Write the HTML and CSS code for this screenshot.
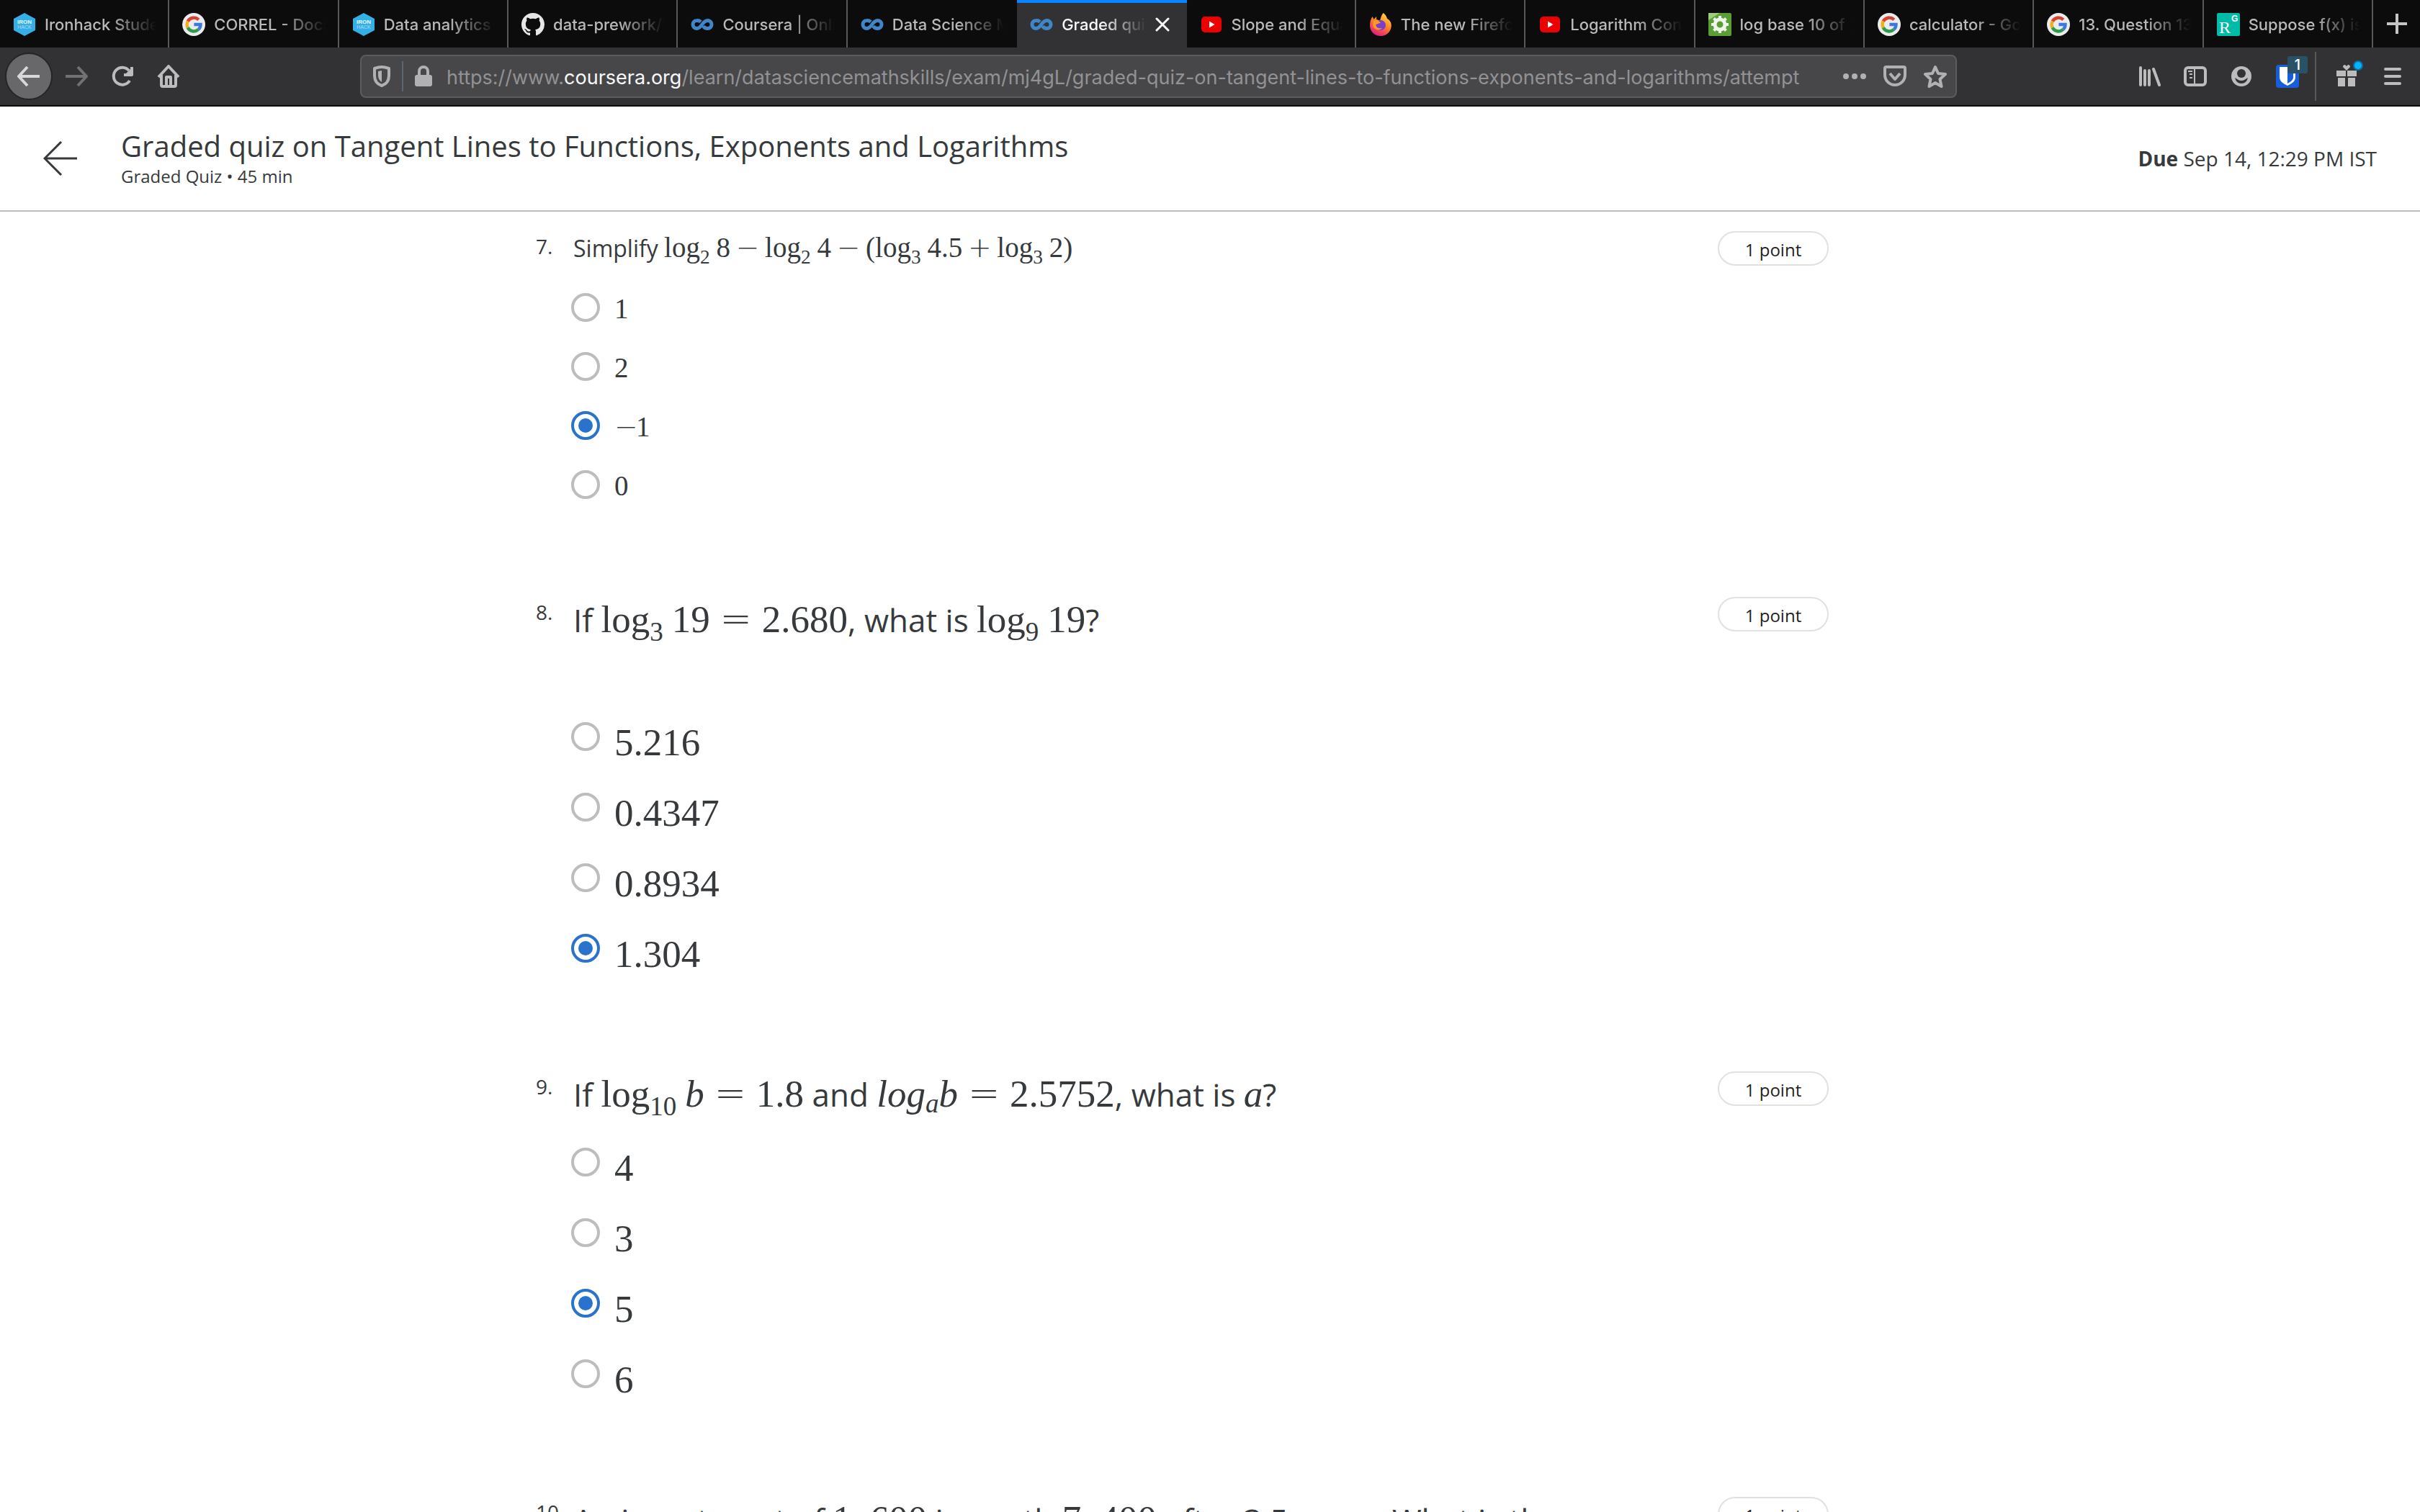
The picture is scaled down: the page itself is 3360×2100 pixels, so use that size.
FILE: index.html
```html
<!DOCTYPE html>
<html lang="en">
<head>
<meta charset="utf-8">
<title>Graded quiz on Tangent Lines to Functions, Exponents and Logarithms</title>
<link rel="stylesheet" href="styles.css">
</head>
<body>
<svg class="sprite" aria-hidden="true">
  <symbol id="google" viewBox="0 0 32 32">
    <circle cx="16" cy="16" r="16" fill="#ececec"/>
    <g fill="none" stroke-width="4.4">
      <path stroke="#d8402f" d="M7.7 11.6A9.5 9.5 0 0 1 22.8 9.4"/>
      <path stroke="#eeb01c" d="M7.7 20.4a9.5 9.5 0 0 1 0-8.8"/>
      <path stroke="#2f9a4c" d="M22.5 22.9A9.5 9.5 0 0 1 7.7 20.4"/>
      <path stroke="#3f78dc" d="M16.4 16h9.1c0 3-1.1 5.300-3 6.900"/>
    </g>
  </symbol>
  <symbol id="github" viewBox="0 0 16 16">
    <path fill="#e6e6e6" d="M8 0C3.580 0 0 3.580 0 8c0 3.540 2.290 6.530 5.470 7.590.4.070.55-.17.55-.38v-1.490c-2.010.37-2.530-.49-2.690-.94-.09-.23-.48-.94-.82-1.130-.28-.15-.68-.52-.01-.53.63-.01 1.080.58 1.230.82.72 1.210 1.870.87 2.330.66.07-.52.28-.87.51-1.070-1.780-.2-3.640-.89-3.640-3.950 0-.87.31-1.590.82-2.150-.08-.2-.36-1.020.08-2.120 0 0 .67-.21 2.200.82a7.600 7.600 0 0 1 4 0c1.530-1.040 2.200-.82 2.200-.82.44 1.100.16 1.920.08 2.120.51.56.82 1.270.82 2.150 0 3.070-1.870 3.750-3.650 3.950.29.25.54.73.54 1.480v2.200c0 .21.15.46.55.38A8 8 0 0 0 16 8c0-4.420-3.580-8-8-8z"/>
  </symbol>
  <symbol id="coursera" viewBox="0 0 32 32">
    <path fill="none" stroke="#3f86c8" stroke-width="5" d="M14 12.300C12.300 10.800 10.500 10.300 8.500 10.500a5.500 5.500 0 0 0 0 11C15.500 21.500 16 10.500 23.500 10.500a5.500 5.500 0 0 1 0 11c-3 0-4.800-1.300-6-3.300"/>
  </symbol>
  <symbol id="youtube" viewBox="0 0 32 32">
    <rect x="2" y="5" width="28" height="22" rx="5" fill="#ec0000"/>
    <path fill="#fff" d="M13 11.500 20.500 16 13 20.500z"/>
  </symbol>
  <symbol id="firefox" viewBox="0 0 32 32">
    <defs>
      <linearGradient id="flame" x1=".8" y1="0" x2=".3" y2="1"><stop offset="0" stop-color="#ffe14d"/><stop offset=".45" stop-color="#ff8a1f"/><stop offset="1" stop-color="#e31587"/></linearGradient>
    </defs>
    <path fill="url(#flame)" d="M19.500 0c4 3 5 6 5.500 8 4 2 6 6 5.800 10C30.300 26 24 32 16 32S1 26 1 17.500C1 13 2 9 4.500 5l2 4 3.500-4v4l5 1.500c1-4 2-7 4.500-10.500z"/>
    <circle cx="16" cy="17" r="7" fill="#7a3fc8"/>
    <path fill="#ff9a22" d="M6 11c4-2 8 0 10 3-3 0-5 2-7 2 1 5 5 6 9 5-3 4-12 3-13-4z"/>
  </symbol>
  <symbol id="symbolab" viewBox="0 0 32 32">
    <rect width="32" height="32" rx="2" fill="#5a9e34"/><path fill="#9ccc7c" d="M0 10V0h16z"/>
    <circle cx="16" cy="16" r="7" fill="none" stroke="#f0f5ec" stroke-width="5"/>
    <path stroke="#f0f5ec" stroke-width="4" d="M16 4v5M16 23v5M4 16h5M23 16h5M7.500 7.500l3.500 3.500M21 21l3.500 3.500M24.500 7.500 21 11M11 21l-3.500 3.500"/>
  </symbol>
</svg>

<div class="browser">
  <nav class="tabs" aria-label="Open tabs">
    <button class="tab"><svg viewBox="0 0 32 32"><path fill="#35b0e6" d="M16 0 31 8v16L16 32 1 24V8z"/><text x="16" y="15" text-anchor="middle" font-size="8" font-weight="700" fill="#e8f6fc">IRON</text><text x="16" y="22" text-anchor="middle" font-size="7" fill="#a5dcf4">HACK</text></svg><span>Ironhack Student</span></button>
    <button class="tab"><svg><use href="#google"/></svg><span>CORREL - Docs</span></button>
    <button class="tab"><svg viewBox="0 0 32 32"><path fill="#35b0e6" d="M16 0 31 8v16L16 32 1 24V8z"/><text x="16" y="15" text-anchor="middle" font-size="8" font-weight="700" fill="#e8f6fc">IRON</text><text x="16" y="22" text-anchor="middle" font-size="7" fill="#a5dcf4">HACK</text></svg><span>Data analytics</span></button>
    <button class="tab"><svg><use href="#github"/></svg><span>data-prework/1</span></button>
    <button class="tab"><svg><use href="#coursera"/></svg><span>Coursera | Online</span></button>
    <button class="tab before-active"><svg><use href="#coursera"/></svg><span>Data Science Math</span></button>
    <div class="tab active"><svg><use href="#coursera"/></svg><span>Graded quiz</span>
      <button class="close" aria-label="Close tab"><svg viewBox="0 0 20 20"><path d="m2 2 16 16M18 2 2 18"/></svg></button></div>
    <button class="tab"><svg><use href="#youtube"/></svg><span>Slope and Equation</span></button>
    <button class="tab"><svg><use href="#firefox"/></svg><span>The new Firefox</span></button>
    <button class="tab"><svg><use href="#youtube"/></svg><span>Logarithm Conversion</span></button>
    <button class="tab"><svg><use href="#symbolab"/></svg><span>log base 10 of 2</span></button>
    <button class="tab"><svg><use href="#google"/></svg><span>calculator - Google</span></button>
    <button class="tab"><svg><use href="#google"/></svg><span>13. Question 13</span></button>
    <button class="tab"><svg viewBox="0 0 32 32"><rect width="32" height="32" rx="2" fill="#00bba8"/><text x="3" y="28" font-size="24" fill="#fff" class="serif-mark">R</text><text x="20" y="12" font-size="12" font-weight="700" fill="#fff">G</text></svg><span>Suppose f(x) is a</span></button>
    <button class="new-tab" aria-label="New tab"><svg viewBox="0 0 32 32"><path d="M16 2v28M2 16h28"/></svg></button>
  </nav>

  <div class="toolbar">
    <div class="nav-buttons">
      <button class="back" aria-label="Back"><svg viewBox="0 0 32 32"><path d="M31 16H2M14 3 2 16l12 13"/></svg></button>
      <button class="dim" aria-label="Forward"><svg viewBox="0 0 32 32"><path d="M1 16h29M18 3l12 13-12 13"/></svg></button>
      <button aria-label="Reload"><svg viewBox="0 0 32 32"><path d="M26 22A12 12 0 1 1 25 8M29 3v11H18"/><path class="solid" stroke="none" d="M30 3v12H18z"/></svg></button>
      <button aria-label="Home"><svg viewBox="0 0 32 32"><path d="M2 17 16 2l14 15M6 14v14q0 2 2 2h16q2 0 2-2V14M13 29V17h6v12"/></svg></button>
    </div>
    <div class="address">
      <svg viewBox="0 0 32 32"><path d="M16 3c4 0 7 1 10 2v10c0 7-4 12-10 14C10 27 6 22 6 15V5c3-1 6-2 10-2z"/><path class="solid" stroke="none" d="M16 8v16c-3-2-5-5-5-9V9z"/></svg>
      <i class="rule"></i>
      <svg viewBox="0 0 32 32"><rect class="solid" x="4" y="14" width="24" height="16" rx="3" stroke="none"/><path d="M10 15V9a6 6 0 0 1 12 0v6"/></svg>
      <div class="url" role="textbox" aria-label="Address" contenteditable="true">https://www.<b>coursera.org</b>/learn/datasciencemathskills/exam/mj4gL/graded-quiz-on-tangent-lines-to-functions-exponents-and-logarithms/attempt</div>
      <div class="address-actions">
        <button aria-label="Page actions"><svg viewBox="0 0 32 32"><g class="solid" stroke="none"><circle cx="4" cy="16" r="4"/><circle cx="16" cy="16" r="4"/><circle cx="28" cy="16" r="4"/></g></svg></button>
        <button aria-label="Save to Pocket"><svg viewBox="0 0 32 32"><path d="M4 3h24q2 0 2 2v9a14 14 0 0 1-28 0V5q0-2 2-2zM9 12l7 8 7-8"/></svg></button>
        <button aria-label="Bookmark"><svg viewBox="0 0 32 32"><path d="m16 3 4 9 10 1-7.500 7 2 10L16 25l-8.500 5 2-10L2 13l10-1z"/></svg></button>
      </div>
    </div>
    <div class="tools">
      <button aria-label="Library"><svg viewBox="0 0 32 32"><path stroke-linecap="round" d="M4 4v24M10 8v20M16 8v20M22 6l8 22"/></svg></button>
      <button aria-label="Sidebars"><svg viewBox="0 0 32 32"><rect x="2" y="4" width="28" height="24" rx="4"/><path stroke-width="2" d="M15 4v24M6 9h6M8 13h4M8 18h4"/></svg></button>
      <button aria-label="Account"><svg viewBox="0 0 32 32"><circle class="solid" stroke="none" cx="16" cy="16" r="14"/><circle fill="#323234" stroke="none" cx="16" cy="12" r="6"/><path fill="#323234" stroke="none" d="M7 18q2 1 4 2.500 5 3 10 0 2-1.500 4-2.500-2 8-9 8t-9-8z"/></svg></button>
      <button class="bitwarden" aria-label="Bitwarden"><svg viewBox="0 0 32 32"><rect width="32" height="32" rx="4" fill="#175ddc" stroke="none"/><path fill="#fff" stroke="none" d="M5 3h22v14c0 6-5 9-11 12C10 26 5 23 5 17z"/><path fill="#175ddc" stroke="none" d="M16 6h8v11c0 4-3 6-8 9z"/></svg><span class="badge">1</span></button>
      <i class="rule"></i>
      <button class="gift" aria-label="What's new"><svg viewBox="0 0 32 32"><path class="solid" stroke="none" d="M2 8h13v8H2zM17 8h13v8H17zM4 18h10v12H4zM18 18h10v12H18zM16 8l-5-5q0-3 3-3l2 2 2-2q3 0 3 3z"/></svg><span class="dot"></span></button>
      <button aria-label="Menu"><svg viewBox="0 0 32 32"><path stroke-linecap="round" d="M6 6h20M6 16h20M6 26h20"/></svg></button>
    </div>
  </div>

  <header class="quiz-header">
    <a class="return" href="#" aria-label="Back to course"><svg viewBox="0 0 48 48"><path d="M47 24H2M25 1 2 24l23 23"/></svg></a>
    <div class="heading">
      <h1>Graded quiz on Tangent Lines to Functions, Exponents and Logarithms</h1>
      <p>Graded Quiz • 45 min</p>
    </div>
    <p class="due"><b>Due</b> Sep 14, 12:29 PM IST</p>
  </header>

  <main class="page">
    <div class="quiz">
      <section class="question small">
        <span class="number">7.</span>
        <div class="body">
          <p class="prompt">Simplify <span class="math">log<sub>2</sub><i class="thin"></i>8<i class="bin">−</i>log<sub>2</sub><i class="thin"></i>4<i class="bin">−</i>(log<sub>3</sub><i class="thin"></i>4.5<i class="bin">+</i>log<sub>3</sub><i class="thin"></i>2)</span></p>
          <div class="options">
            <label><input type="radio" name="q7"><span class="math">1</span></label>
            <label><input type="radio" name="q7"><span class="math">2</span></label>
            <label><input type="radio" name="q7" checked><span class="math"><i class="neg">−</i>1</span></label>
            <label><input type="radio" name="q7"><span class="math">0</span></label>
          </div>
        </div>
        <span class="points">1 point</span>
      </section>

      <section class="question">
        <span class="number">8.</span>
        <div class="body">
          <p class="prompt">If <span class="math">log<sub>3</sub><i class="thin"></i>19<i class="rel">=</i>2.680</span>, what is <span class="math">log<sub>9</sub><i class="thin"></i>19</span>?</p>
          <p class="blank"></p>
          <div class="options">
            <label><input type="radio" name="q8"><span class="math">5.216</span></label>
            <label><input type="radio" name="q8"><span class="math">0.4347</span></label>
            <label><input type="radio" name="q8"><span class="math">0.8934</span></label>
            <label><input type="radio" name="q8" checked><span class="math">1.304</span></label>
          </div>
        </div>
        <span class="points">1 point</span>
      </section>

      <section class="question">
        <span class="number">9.</span>
        <div class="body">
          <p class="prompt">If <span class="math">log<sub>10</sub><i class="thin"></i><var>b</var><i class="rel">=</i>1.8</span> and <span class="math"><var>log</var><sub class="shallow"><var>a</var></sub><var>b</var><i class="rel">=</i>2.5752</span>, what is <span class="math"><var>a</var></span>?</p>
          <div class="options">
            <label><input type="radio" name="q9"><span class="math">4</span></label>
            <label><input type="radio" name="q9"><span class="math">3</span></label>
            <label><input type="radio" name="q9" checked><span class="math">5</span></label>
            <label><input type="radio" name="q9"><span class="math">6</span></label>
          </div>
        </div>
        <span class="points">1 point</span>
      </section>

      <section class="question">
        <span class="number">10.</span>
        <div class="body">
          <p class="prompt">An investment of <span class="math">1,<i class="thin"></i>600</span> is worth <span class="math">7,<i class="thin"></i>400</span> after 3.5 years. What is the</p>
        </div>
        <span class="points">1 point</span>
      </section>
    </div>
  </main>
</div>
</body>
</html>
```
FILE: styles.css
```css
* { box-sizing: border-box; }
body { margin: 0; background: #fff; color: #373a3c; font-family: "Open Sans", sans-serif; }
p, h1 { margin: 0; font-weight: 400; }
i { font-style: normal; }
button { padding: 0; border: 0; background: none; color: inherit; font: inherit; }
svg { display: block; width: 32px; height: 32px; flex: none; }
.sprite { position: absolute; width: 0; height: 0; }
.tab text { font-family: "Liberation Sans", sans-serif; }
.tab .serif-mark { font-family: "Liberation Serif", serif; }

.browser { display: flex; flex-direction: column; height: 100vh; overflow: hidden; }

/* tab strip */
.tabs { display: grid; grid-template-columns: repeat(14, minmax(0, 1fr)) 65px; height: 66px; flex: none; background: #0c0c0d; color: #b9b9ba; font: 500 22px/30px Inter, sans-serif; }
.tab { display: flex; align-items: center; gap: 12px; padding: 2px 16px 0 18px; border-right: 2px solid #59595a; text-align: left; }
.tab span { flex: 1; min-width: 0; overflow: hidden; white-space: nowrap; -webkit-mask-image: linear-gradient(to left, transparent, #000 64px); mask-image: linear-gradient(to left, transparent, #000 64px); }
.tab.before-active { border-color: transparent; }
.tab.active { padding: 0 24px 2px 18px; border-top: 4px solid #0a84ff; border-right: 0; background: #323234; color: #f9f9fa; }
.close svg { width: 20px; height: 20px; fill: none; stroke: #f9f9fa; stroke-width: 3; stroke-linecap: round; }
.new-tab { display: grid; place-items: center; }
.new-tab svg { stroke: #c4c4c5; stroke-width: 4; }

/* navigation toolbar */
.toolbar { display: flex; flex: none; height: 82px; align-items: center; justify-content: space-between; border-bottom: 2px solid #0c0c0d; background: #323234; color: #bcbcbd; }
.toolbar svg { fill: none; stroke: currentColor; stroke-width: 4; stroke-linejoin: round; }
.toolbar .solid { fill: currentColor; }
.nav-buttons { display: flex; align-items: center; gap: 32px; padding-left: 7px; width: 500px; flex: none; }
.nav-buttons .back { display: grid; width: 66px; height: 66px; margin-right: -15px; place-items: center; border: 2px solid #252526; border-radius: 50%; background: #68686a; color: #d8d8d9; }
.nav-buttons .dim { color: #717173; }
.address { display: flex; flex: 1; height: 60px; min-width: 0; align-items: center; padding: 0 12px; border: 2px solid #5c5c5e; border-radius: 8px; background: #474749; color: #b1b1b3; }
.address .rule { width: 2px; height: 42px; margin: 0 12px; background: #5d6772; }
.url { flex: 1; min-width: 0; margin: 4px 20px 0 16px; overflow: hidden; color: #929294; font: 400 27px/36px Inter, sans-serif; white-space: nowrap; }
.url b { color: #f9f9fa; font-weight: 400; }
.address-actions { display: flex; gap: 24px; }
.tools { display: flex; flex: 0 0 643px; align-items: center; justify-content: flex-end; gap: 32px; padding-right: 22px; }
.tools .rule { width: 2px; height: 68px; margin: 0 -6px 0 -10px; background: #59595a; }
.bitwarden, .gift { position: relative; }
.badge { position: absolute; top: -12px; right: -12px; width: 28px; height: 24px; border-radius: 3px; background: #2a5266; color: #fff; font: 500 20px/24px Inter, sans-serif; }
.dot { position: absolute; top: -6px; right: -7px; width: 14px; height: 14px; border: 2px solid #0a6f9f; border-radius: 50%; background: #00b3ff; }

/* quiz header */
.quiz-header { display: flex; flex: none; height: 146px; align-items: center; padding: 0 60px; border-bottom: 2px solid #bdbdbd; }
.return svg { width: 48px; height: 48px; fill: none; stroke: #373a3c; stroke-width: 3; }
.heading { flex: 1; padding-left: 60px; }
.heading h1 { padding-bottom: 2px; font-size: 40px; line-height: 48px; }
.heading p { font-size: 24px; line-height: 32px; }
.due { font-size: 28px; line-height: 36px; }

/* questions */
.page { flex: 1; min-height: 0; overflow: hidden; }
.quiz { max-width: 1872px; margin: 0 auto; padding: 27px 77px 0 0; }
.question { display: grid; grid-template-columns: 49px 1fr 154px; align-items: start; padding-bottom: 135px; --text: 44px; --line: 64px; --math: 53px; --row: 56px; --gap: 42px; }
.question.small { padding-bottom: 132px; --text: 32px; --line: 48px; --math: 39px; --row: 44px; --gap: 38px; }
.number { font-size: 28px; line-height: 42px; white-space: nowrap; }
.prompt { padding-left: 3px; font-size: var(--text); line-height: var(--line); white-space: nowrap; }
.blank { height: 68px; }
.options { display: grid; gap: var(--gap); padding-top: var(--gap); justify-items: start; }
.options label { display: flex; gap: 20px; height: var(--row); }
.options .math { line-height: var(--row); }
.options input { display: grid; width: 40px; height: 40px; margin: 0; place-items: center; appearance: none; border: 4px solid #bdbdbd; border-radius: 50%; }
.options input:checked { border-color: #2a73cc; }
.options input:checked::before { width: 20px; height: 20px; border-radius: 50%; background: #2a73cc; content: ""; }
.points { height: 48px; padding-top: 2px; border: 2px solid #e1e1e1; border-radius: 24px; color: #1f1f1f; font-size: 24px; line-height: 44px; text-align: center; }

/* formulas */
.math { font-family: "Liberation Serif", serif; font-size: var(--math); line-height: 0; }
.math sub { font-size: 70%; line-height: 0; vertical-align: -12px; }
.small .math sub { vertical-align: -9px; }
.math .shallow { vertical-align: -8px; }
.math var { font-style: italic; }
.thin { display: inline-block; width: 12px; }
.small .thin { width: 9px; }
.bin, .rel, .neg { display: inline-block; font-family: "DejaVu Sans", sans-serif; font-weight: 200; text-align: center; }
.bin { width: 48px; }
.rel { width: 72px; }
.neg { width: 30px; }
```
